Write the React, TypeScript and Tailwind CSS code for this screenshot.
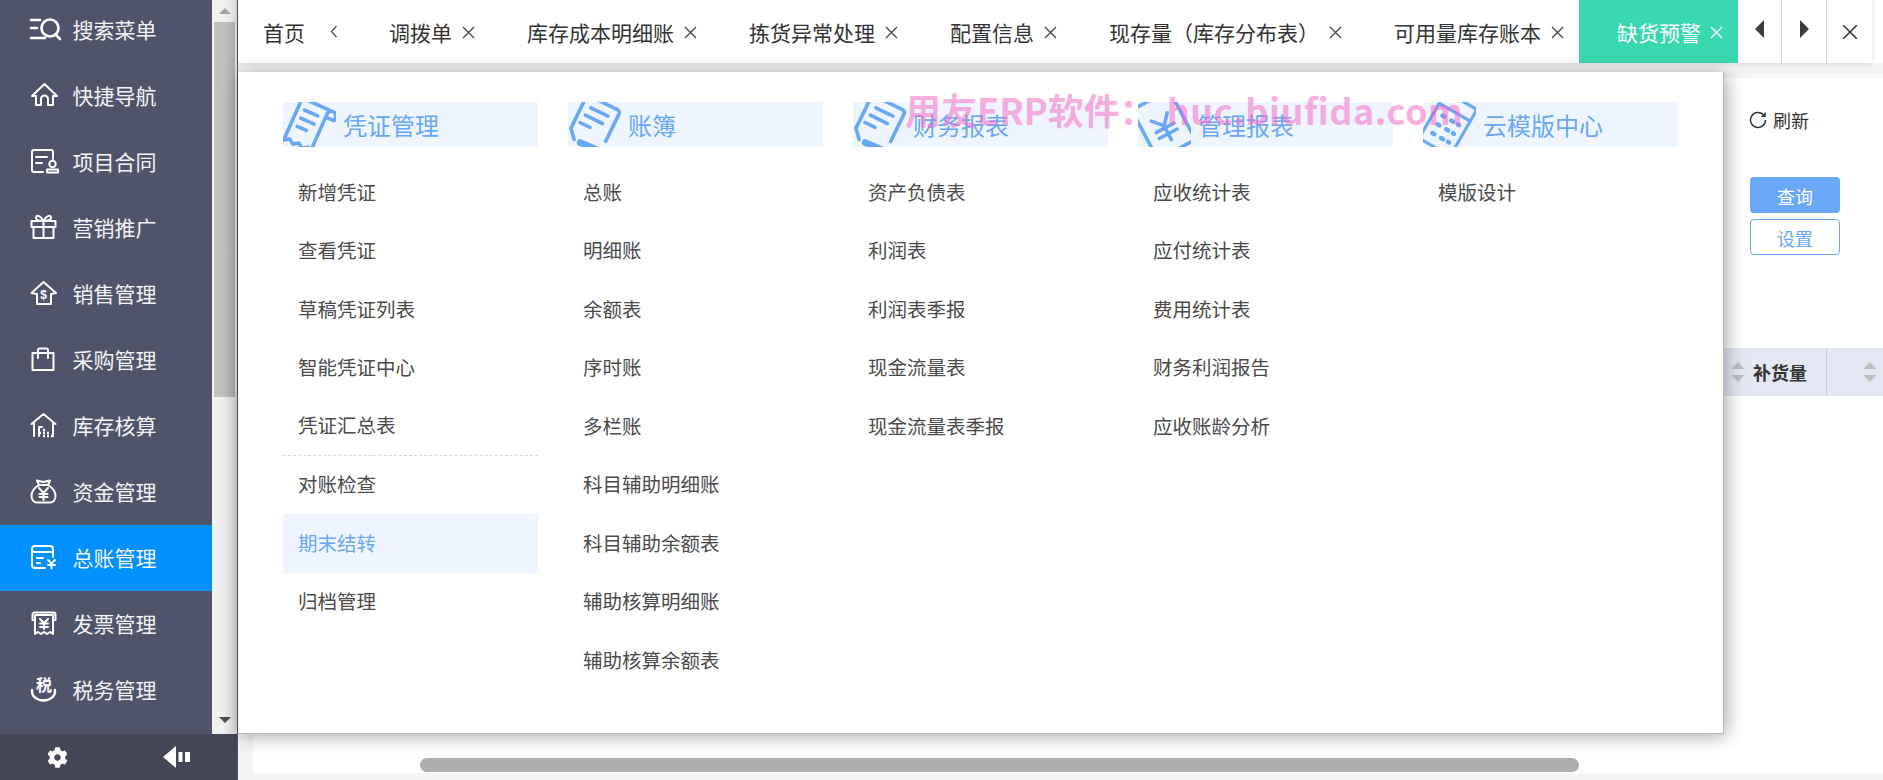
import React from "react";
import { FaCog } from "react-icons/fa";

const s = { fill: "none", stroke: "#fff", strokeWidth: 2, strokeLinecap: "round" as const, strokeLinejoin: "round" as const };

const SideIcons: React.ReactNode[] = [
  <g {...s}><path d="M1 5h9M1 13h6M1 23h14" strokeWidth={2.6} /><circle cx="20" cy="13" r="8.5" strokeWidth={2.6} /><path d="M26 20l4 4" strokeWidth={2.6} /></g>,
  <g {...s}><path d="M2 15L14.5 3 27 15h-4v9h-5v-6a3.5 3.5 0 0 0-7 0v6H6v-9z" /></g>,
  <g {...s}><path d="M23 12V5a2 2 0 0 0-2-2H4a2 2 0 0 0-2 2v18a2 2 0 0 0 2 2h9M6 10h11M6 16h6" /><circle cx="22.500" cy="17" r="3.200" /><path d="M17 25.500v-3h11v3z" /></g>,
  <g {...s}><path d="M1.500 8h24v6h-24zM3.500 14v11h20V14M13.500 8v17M13.500 8C10 8 6 7 6 4.500S10 1.500 13.500 8C17 1.500 21 2 21 4.500S17 8 13.500 8" /></g>,
  <g {...s}><path d="M13.500 3L26 14l-5 1v10H7V15l-5.500-1z" /><text x="13.500" y="20" textAnchor="middle" fontSize="12" fontWeight="700" fill="#fff" stroke="none" fontFamily="Liberation Sans">$</text></g>,
  <g {...s}><path d="M2.500 8h21v17h-21zM8 13V5a1.500 1.500 0 0 1 1.500-1.500h7A1.500 1.500 0 0 1 18 5v8" /></g>,
  <g {...s}><path d="M1.500 13L13.500 3l12 10M4 11v14M23 11v14M9 25v-9h3" /><path d="M13 19h2M9 22h2M13 22h2M17 22h2M13 25h2M17 25h2M21 25h2" strokeWidth={2.4} strokeLinecap="butt" /></g>,
  <g {...s}><path d="M9 8L7 3.500 13.500 5 20 3.500 18 8M9 8h9M9 8C4 11 1.500 15 1.500 19c0 4.500 3 6.500 6 6.500h12c3 0 6-2 6-6.500 0-4-2.500-8-7.500-11" /><path d="M9 11l4.500 5 4.500-5M13.500 16v7M9.500 17h8M9.500 20h8" /></g>,
  <g {...s}><path d="M23 14V6a3 3 0 0 0-3-3H5a3 3 0 0 0-3 3v16a3 3 0 0 0 3 3h10M2 9h21M7 15h6M7 20h3" /><path d="M18 17l3.500 3.500 3.500-3.500M21.500 20.500v5M18 22h7" strokeWidth={1.800} /></g>,
  <g {...s}><path d="M4 11H2.500V5.500a2 2 0 0 1 2-2h19a2 2 0 0 1 2 2V11H24M5 6h18v19l-3-2-3 2-3-2-3 2-3-2-3 2z" /><path d="M10 10l4 4 4-4M14 14v6M10 14.500h8M10 18h8" /></g>,
  <g {...s}><text x="14" y="16" textAnchor="middle" fontSize="16" fontWeight="700" fill="#fff" stroke="none" fontFamily="Noto Sans CJK SC">税</text><path d="M2 15c-.5 6.500 5 10.500 11.500 10.500S25.500 21.500 25 15" strokeWidth={2.4} /></g>,
];

const sideNames = ["搜索菜单", "快捷导航", "项目合同", "营销推广", "销售管理", "采购管理", "库存核算", "资金管理", "总账管理", "发票管理", "税务管理"];

const tabs = ["调拨单", "库存成本明细账", "拣货异常处理", "配置信息", "现存量（库存分布表）", "可用量库存账本"];

const h = { fill: "none", stroke: "#69a7f7", strokeWidth: 3.200, strokeLinecap: "round" as const, strokeLinejoin: "round" as const };

const docLines = <path d="M17 12h17M15.500 20h17M14 28h10" />;

const DocIcon = (
  <g {...h} transform="rotate(26 25 24)">
    <path d="M9 36V6a3 3 0 0 1 3-3h27a3 3 0 0 1 3 3v27" />
    {docLines}
    <path d="M9 36l7 8" />
    <path d="M22 44l19-1" strokeWidth={6} />
  </g>
);

const HeadIcons: React.ReactNode[] = [
  <g {...h} transform="rotate(24 25 24)"><path d="M39 5H14a3 3 0 0 0-3 3v38l4.500-3 4.500 3 4.500-3 4.500 3 4.500-3 3.500 3V9a4 4 0 0 1 4-4 4 4 0 0 1 4 4v3h-7" /><path d="M17 14h13M17 22h13M17 30h9" /></g>,
  DocIcon,
  DocIcon,
  <g {...h} transform="rotate(-28 25 24)"><path d="M10 0h30a4 4 0 0 1 4 4v42a4 4 0 0 1-4 4H10a4 4 0 0 1-4-4V4a4 4 0 0 1 4-4z" /><path d="M17 17l8 9 8-9M25 26v14M16 28h18M16 34h18" /></g>,
  <g {...h} strokeWidth={2.800} transform="rotate(30 25 24)"><path d="M12 0h26a3 3 0 0 1 3 3v42a3 3 0 0 1-3 3H12a3 3 0 0 1-3-3V3a3 3 0 0 1 3-3zM9 12h32" /><path d="M17 20h2M26 20h2M33 20h1M17 29h2M26 29h2M33 29h1M17 38h2M26 38h2M33 38h1" strokeWidth={4} /></g>,
];

type Col = { title: string; items: string[] };
const cols: Col[] = [
  { title: "凭证管理", items: ["新增凭证", "查看凭证", "草稿凭证列表", "智能凭证中心", "凭证汇总表", "对账检查", "期末结转", "归档管理"] },
  { title: "账簿", items: ["总账", "明细账", "余额表", "序时账", "多栏账", "科目辅助明细账", "科目辅助余额表", "辅助核算明细账", "辅助核算余额表"] },
  { title: "财务报表", items: ["资产负债表", "利润表", "利润表季报", "现金流量表", "现金流量表季报"] },
  { title: "管理报表", items: ["应收统计表", "应付统计表", "费用统计表", "财务利润报告", "应收账龄分析"] },
  { title: "云模版中心", items: ["模版设计"] },
];

function SortArrows() {
  return (
    <svg width="14" height="20" viewBox="0 0 14 20" className="shrink-0">
      <path d="M7 0l6.500 7H.5z" fill="#bdbdbd" />
      <path d="M7 20l6.500-7H.5z" fill="#bdbdbd" />
    </svg>
  );
}

function X({ color = "#444", size = 13, className = "" }: { color?: string; size?: number; className?: string }) {
  return (
    <svg width={size} height={size} viewBox="0 0 13 13" className={`shrink-0 ${className}`}>
      <path d="M1 1l11 11M12 1L1 12" stroke={color} strokeWidth="1.300" fill="none" />
    </svg>
  );
}

export default function App() {
  return (
    <div className="relative flex h-[780px] w-[1883px] overflow-hidden bg-[#f3f4f6] font-['Noto_Sans_CJK_SC',sans-serif]">
      {/* Sidebar */}
      <aside className="flex h-full w-[238px] shrink-0 flex-col border-r border-[#50546a] bg-[#f1f1f1]">
        <div className="flex h-[734px]">
          <nav className="h-full w-[212px] overflow-hidden bg-[#50546a]">
            <div className="-mt-[3px]">
              {sideNames.map((n, i) => (
                <div key={n} className={`flex h-[66px] items-center pl-[30px] text-[21px] text-[#f4f4f6] ${i === 8 ? "bg-[#0090ff]" : ""}`}>
                  <svg width="31" height="30" viewBox="0 0 31 30" className="shrink-0 overflow-visible">{SideIcons[i]}</svg>
                  <span className="-mt-[2px] ml-[11.500px] leading-[28px]">{n}</span>
                </div>
              ))}
            </div>
          </nav>
          <div className="flex w-[25px] flex-col items-center bg-gradient-to-r from-[#f1f1f1] via-[#f0f0f0] to-[#dcdcdc]">
            <div className="flex h-[22px] items-center justify-center">
              <div className="h-0 w-0 border-x-[6px] border-b-[6px] border-x-transparent border-b-[#a3a3a3]" />
            </div>
            <div className="h-[375px] w-[21px] bg-gradient-to-r from-[#c1c1c1] via-[#c1c1c1] to-[#adadad]" />
            <div className="flex-1" />
            <div className="flex h-[26px] items-center justify-center pb-[2px]">
              <div className="h-0 w-0 border-x-[6px] border-t-[6px] border-x-transparent border-t-[#505050]" />
            </div>
          </div>
        </div>
        <div className="flex h-[46px] items-center bg-[#424656] pl-[47px]">
          <FaCog className="text-white" size={21} />
          <svg width="28" height="22" viewBox="0 0 28 22" className="ml-[95px]">
            <path d="M0 11L13 0v22z" fill="#fff" />
            <rect x="15.500" y="6" width="4" height="10" fill="#fff" />
            <rect x="22" y="6" width="5" height="10" fill="#fff" />
          </svg>
        </div>
      </aside>

      {/* Main */}
      <main className="flex min-w-0 flex-1 flex-col">
        <div className="flex h-[63px] shrink-0 bg-white">
          <div className="flex h-full w-[1634px] shrink-0 shadow-[0_0_6px_rgba(0,0,0,0.15)]">
            <div className="flex h-full w-[114px] shrink-0 items-center pl-[25px] text-[21px] leading-[28px] text-[#333]">
              <span>首页</span>
              <svg width="8" height="13" viewBox="0 0 8 13" className="ml-[25px]">
                <path d="M6.500 1L1.500 6.500l5 5.500" fill="none" stroke="#555" strokeWidth="1.300" />
              </svg>
            </div>
            {tabs.map((t) => (
              <div key={t} className="flex h-full shrink-0 items-center gap-[10px] pl-[37px] pr-[15px] text-[21px] leading-[28px] text-[#333]">
                <span className="whitespace-nowrap">{t}</span>
                <X className="mt-[2px]" />
              </div>
            ))}
            <div className="flex h-full shrink-0 items-center gap-[9px] bg-[#3ad8b0] pl-[38px] pr-[15px] text-[21px] leading-[28px] text-white">
              <span>缺货预警</span>
              <X color="#fff" className="mt-[2px]" />
            </div>
            <div className="flex h-full w-[44px] shrink-0 items-center justify-center border-r border-[#d8d8d8] pb-[6px]">
              <div className="h-0 w-0 border-y-[9px] border-r-[9px] border-y-transparent border-r-[#3c3c3c]" />
            </div>
            <div className="flex h-full w-[45px] shrink-0 items-center justify-center border-r border-[#d8d8d8] pb-[6px]">
              <div className="h-0 w-0 border-y-[9px] border-l-[9px] border-y-transparent border-l-[#3c3c3c]" />
            </div>
            <div className="flex h-full w-[45px] shrink-0 items-center justify-center">
              <X color="#333" size={16} />
            </div>
          </div>
        </div>

        <div className="flex min-h-0 flex-1 flex-col pb-[7px] pl-[15px] pt-[15px]">
          <div className="flex min-h-0 flex-1 flex-col bg-white">
            <div className="flex min-h-0 flex-1 justify-end">
              <div className="w-[159px] shrink-0">
                <div className="flex h-[99px] items-start pl-[25px] pt-[33px] text-[18px] leading-[18px] text-[#333]">
                  <svg width="18" height="18" viewBox="0 0 18 18" className="mr-[6px]">
                    <path d="M16.500 9a7.500 7.500 0 1 1-2.300-5.400" fill="none" stroke="#333" strokeWidth="1.500" />
                    <path d="M16.800 1v5h-5z" fill="#333" />
                  </svg>
                  刷新
                </div>
                <div className="flex flex-col gap-[6px] pl-[26px]">
                  <button className="h-[36px] w-[90px] rounded-[4px] bg-[#69a7f7] pt-[3px] text-[18px] text-white">查询</button>
                  <button className="h-[36px] w-[90px] rounded-[4px] border border-[#69a7f7] bg-white pt-[2px] text-[18px] text-[#69a7f7]">设置</button>
                </div>
                <div className="mt-[93px] flex h-[48px] items-center bg-[#e4e8f4] pl-[7px]">
                  <SortArrows />
                  <span className="ml-[8px] text-[18px] font-bold leading-[24px] text-[#333]">补货量</span>
                  <div className="ml-[19px] h-full w-px bg-[#cfcfcf]" />
                  <div className="ml-[36px]"><SortArrows /></div>
                </div>
              </div>
            </div>
            <div className="h-[15px] shrink-0 pb-px pl-[167px]">
              <div className="h-[14px] w-[1159px] rounded-[7px] bg-[#aeaeae]" />
            </div>
          </div>
        </div>
      </main>

      {/* Dropdown panel */}
      <div className="absolute left-[238px] top-[72px] z-10 flex h-[662px] w-[1486px] gap-[30px] border-b border-r border-[#b8b8b8] bg-white pl-[45px] pt-[30px] shadow-[2px_2px_18px_rgba(0,0,0,0.35)]">
        {cols.map((c, ci) => (
          <div key={c.title} className="w-[255px] shrink-0">
            <div className="mb-[16px] flex h-[45px] items-center overflow-hidden bg-[#eef5fe]">
              <svg width="56" height="56" viewBox="0 0 50 50" className="-ml-[3px] shrink-0">{HeadIcons[ci]}</svg>
              <span className="ml-[7px] whitespace-nowrap text-[24px] leading-[30px] text-[#69a7f7]">{c.title}</span>
            </div>
            {c.items.map((it) => (
              <div
                key={it}
                className={`flex h-[58.500px] items-center pb-[1.500px] pl-[15px] text-[19.500px] ${
                  it === "期末结转" ? "bg-[#eef5fe] text-[#69a7f7]" : "text-[#4a4a4a]"
                } ${it === "凭证汇总表" ? "border-b border-dashed border-[#d9d9d9]" : ""}`}
              >
                {it}
              </div>
            ))}
          </div>
        ))}
      </div>

      {/* Watermark */}
      <div className="pointer-events-none absolute left-[905px] top-[84px] z-20 whitespace-nowrap text-[36px] font-bold leading-[50px] text-[#f564c0] opacity-50">
        用友ERP软件：<span className="ml-[11px] tracking-[0.5px]">huc.biufida.com</span>
      </div>
    </div>
  );
}
